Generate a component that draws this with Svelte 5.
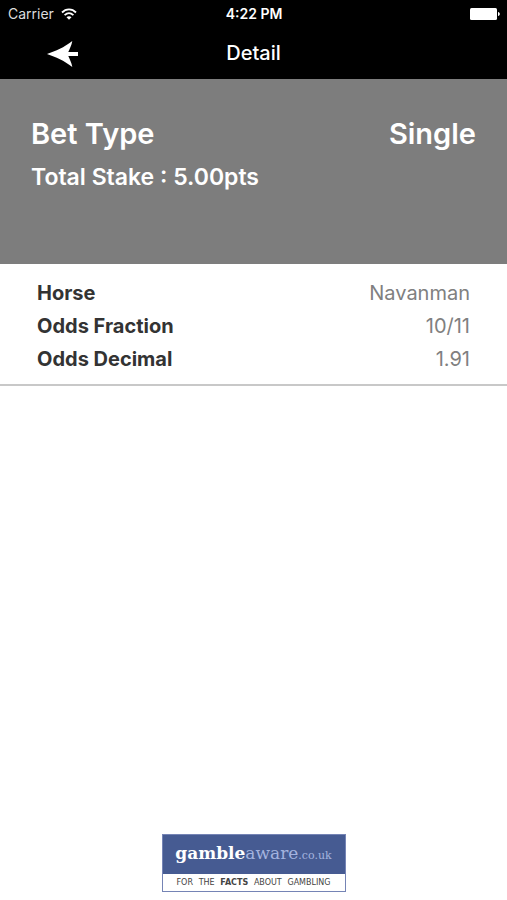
<script lang="ts">
  export let betType = 'Single';
  export let totalStake = '5.00pts';
  export let details: Array<{ label: string; value: string }> = [
    { label: 'Horse', value: 'Navanman' },
    { label: 'Odds Fraction', value: '10/11' },
    { label: 'Odds Decimal', value: '1.91' }
  ];

  function goBack(): void {
    history.back();
  }
</script>

<div class="screen">
  <header>
    <div class="status-bar">
      <div class="carrier">
        <span>Carrier</span>
        <svg width="16" height="12" viewBox="0 0 16 12" fill="none" stroke="#fff" aria-hidden="true">
          <path d="M1 4.5C5 .4 11 .4 15 4.5" stroke-width="1.8" />
          <path d="M3.6 7.2c2.7-2.6 6.1-2.6 8.8 0" stroke-width="1.8" />
          <path d="M8 11.8 5.5 9.3c1.5-1.4 3.5-1.4 5 0z" fill="#fff" stroke="none" />
        </svg>
      </div>
      <span class="time">4:22 PM</span>
      <svg class="battery" width="30" height="12" viewBox="0 0 30 12" fill="#fff" aria-hidden="true">
        <rect width="27" height="12" rx="1.5" />
        <path d="M28 4c2.4.6 2.4 3.4 0 4z" />
      </svg>
    </div>

    <nav class="nav-bar">
      <button type="button" class="back" aria-label="Back" on:click={goBack}>
        <svg width="32" height="28" viewBox="0 0 32 28" fill="#fff" aria-hidden="true">
          <path d="M0 15C9 12 17 8.500 25.300 2 24.600 6.500 22.500 10 21.300 13H31v4h-9.700c1.200 3 3.300 6.500 4 11C17 21.500 9 18 0 15z" />
        </svg>
      </button>
      <h1>Detail</h1>
    </nav>
  </header>

  <main>
    <section class="summary">
      <div class="bet-type">
        <span>Bet Type</span>
        <span>{betType}</span>
      </div>
      <div class="stake">Total Stake : {totalStake}</div>
    </section>

    <table class="details">
      <tbody>
        {#each details as detail}
          <tr>
            <th scope="row">{detail.label}</th>
            <td>{detail.value}</td>
          </tr>
        {/each}
      </tbody>
    </table>
  </main>

  <footer>
    <a class="aware" href="#gambleaware">
      <span class="aware-name"><b>gamble</b>aware<small>.co.uk</small></span>
      <span class="aware-line">
        <span>FOR</span>
        <span>THE</span>
        <b>FACTS</b>
        <span>ABOUT</span>
        <span>GAMBLING</span>
      </span>
    </a>
  </footer>
</div>

<style>
  :global(body) {
    margin: 0;
    background: #fff;
  }

  .screen {
    display: flex;
    flex-direction: column;
    min-height: 100vh;
    font-family: Inter, 'Liberation Sans', sans-serif;
    color: #333;
  }

  header {
    background: #000;
    color: #fff;
  }

  .status-bar {
    display: grid;
    grid-template-columns: 1fr auto 1fr;
    align-items: center;
    height: 27px;
    padding: 0 7px 0 8px;
    font-size: 14px;
  }

  .carrier {
    display: flex;
    align-items: center;
    gap: 7px;
    color: #ddd;
  }

  .time {
    font-weight: 600;
  }

  .battery {
    justify-self: end;
  }

  .nav-bar {
    display: grid;
    grid-template-columns: 1fr auto 1fr;
    align-items: center;
    height: 52px;
  }

  .back {
    justify-self: start;
    display: flex;
    margin-left: 47px;
    padding: 0;
    border: none;
    background: none;
    cursor: pointer;
  }

  h1 {
    margin: 0;
    font-size: 20px;
    font-weight: 500;
  }

  main {
    flex: 1;
  }

  .summary {
    box-sizing: border-box;
    min-height: 185px;
    padding: 35px 31px;
    background: #7d7d7d;
    color: #fff;
    font-weight: 600;
  }

  .bet-type {
    display: flex;
    justify-content: space-between;
    font-size: 29px;
    line-height: 40px;
  }

  .stake {
    margin-top: 3px;
    font-size: 23px;
    line-height: 40px;
  }

  .details {
    width: 100%;
    padding: 13px 37px 8px;
    border-bottom: 2px solid #c8c8c8;
    border-spacing: 0;
    font-size: 20px;
    line-height: 33px;
  }

  th,
  td {
    padding: 0;
  }

  th {
    text-align: left;
    font-weight: 700;
  }

  td {
    text-align: right;
    color: #808080;
  }

  footer {
    display: flex;
    justify-content: center;
    padding: 8px;
  }

  .aware {
    display: flex;
    flex-direction: column;
    box-sizing: border-box;
    width: 184px;
    border: 1px solid #7584b5;
    background: #fff;
    text-align: center;
    text-decoration: none;
    white-space: nowrap;
  }

  .aware-name {
    height: 39px;
    background: #465b92;
    color: #a3b3df;
    font-family: 'DejaVu Serif', serif;
    font-size: 17px;
    line-height: 36px;
  }

  .aware-name b {
    color: #fff;
  }

  .aware-name small {
    font-size: 11px;
    line-height: 1;
  }

  .aware-line {
    display: flex;
    justify-content: space-between;
    padding: 0 14px;
    color: #444;
    font-family: 'DejaVu Sans', sans-serif;
    font-size: 8px;
    line-height: 17px;
  }
</style>
